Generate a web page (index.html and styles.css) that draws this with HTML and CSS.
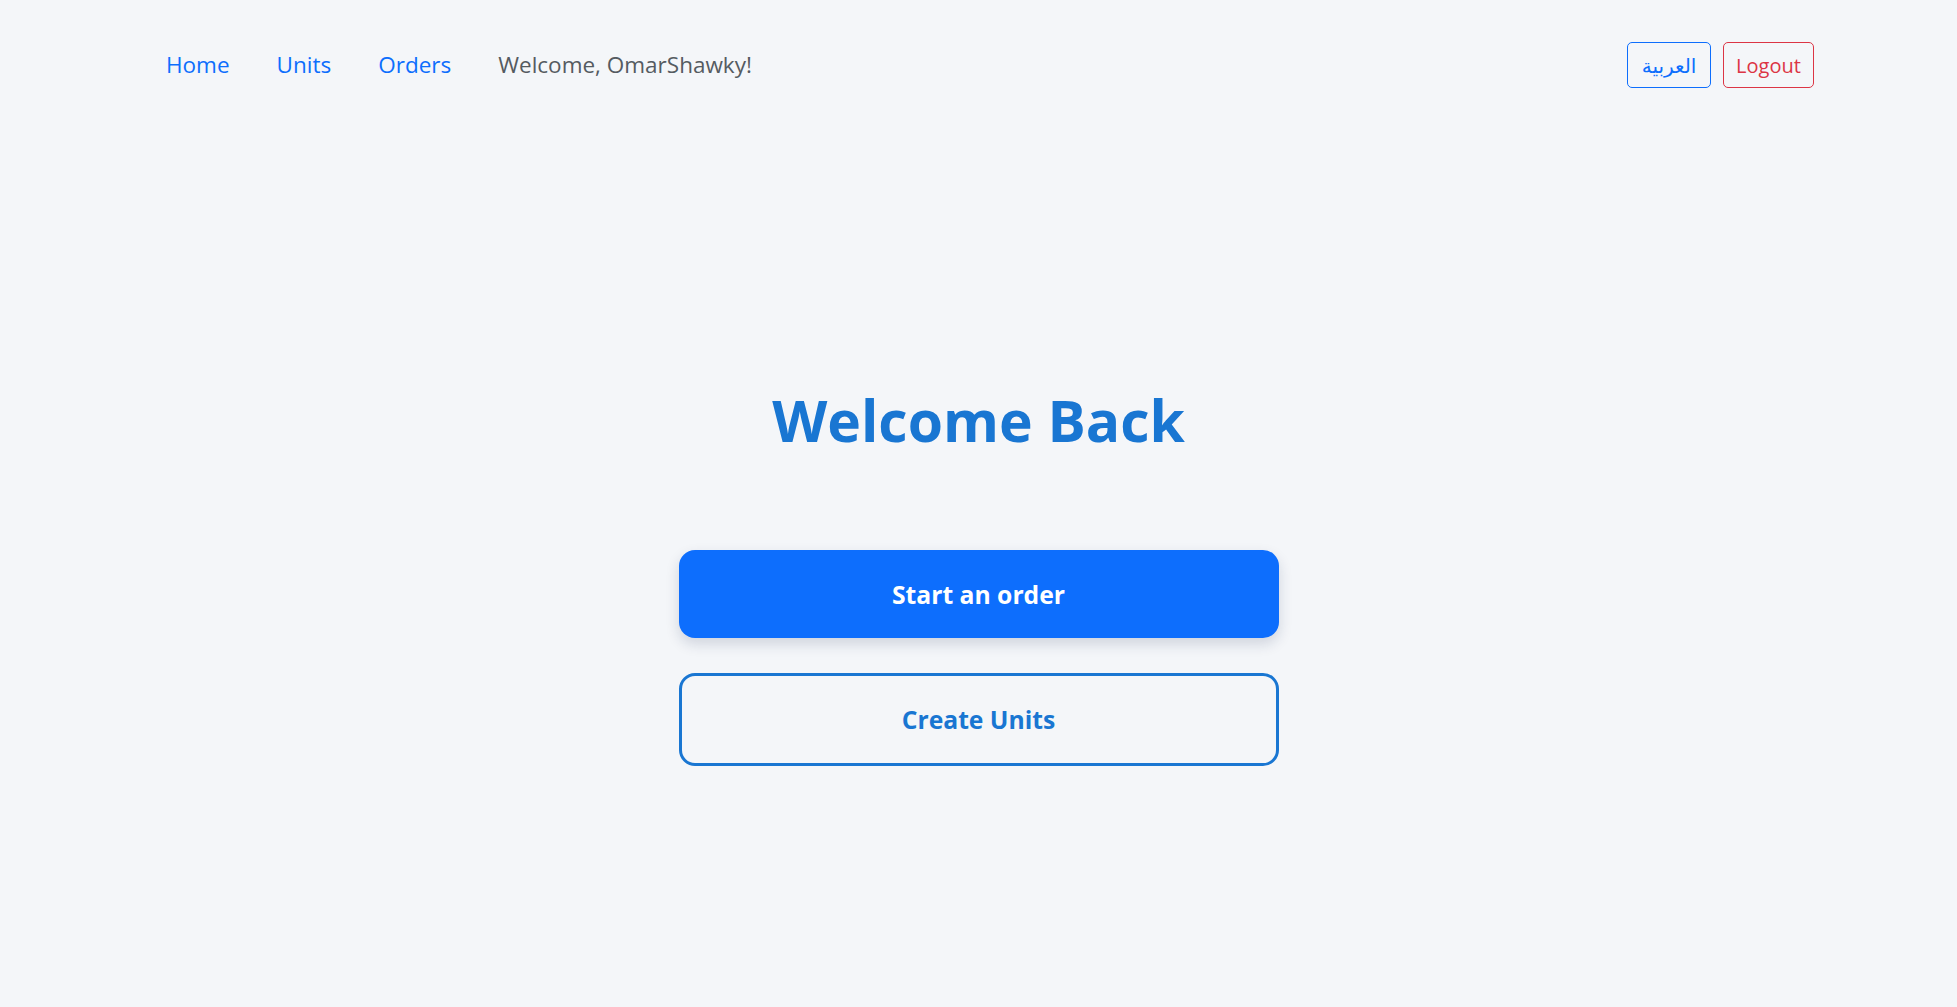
FILE: index.html
```html
<!DOCTYPE html>
<html lang="en">
<head>
<meta charset="utf-8">
<title>Home</title>
<link rel="stylesheet" href="styles.css">
</head>
<body>
<header class="navbar">
  <nav class="nav-left">
    <a class="nav-link" href="#">Home</a>
    <a class="nav-link" href="#">Units</a>
    <a class="nav-link" href="#">Orders</a>
    <span class="nav-text">Welcome, OmarShawky!</span>
  </nav>
  <div class="nav-right">
    <button class="btn-sm btn-lang" lang="ar" dir="rtl">العربية</button>
    <button class="btn-sm btn-logout">Logout</button>
  </div>
</header>
<main class="hero">
  <h1 class="hero-title">Welcome Back</h1>
  <div class="hero-actions">
    <a class="btn-big btn-primary" href="#">Start an order</a>
    <a class="btn-big btn-outline" href="#">Create Units</a>
  </div>
</main>
</body>
</html>
```
FILE: styles.css
```css
* { box-sizing: border-box; }
html, body {
  margin: 0;
  background: #f4f6f9;
  font-family: "Open Sans", "Noto Sans", "DejaVu Sans", sans-serif;
}
.navbar {
  display: flex;
  justify-content: space-between;
  align-items: center;
  padding: 41px 143px 0 143px;
}
.nav-left {
  display: flex;
  align-items: center;
  gap: 47px;
  padding-left: 23px;
}
.nav-link {
  color: #0d6efd;
  text-decoration: none;
  font-size: 22.5px;
  line-height: 48px;
}
.nav-text {
  color: #555b61;
  font-size: 22.5px;
  line-height: 48px;
}
.nav-right {
  display: flex;
  gap: 12px;
}
.btn-sm {
  height: 46px;
  background: transparent;
  border: 1px solid;
  border-radius: 5px;
  font-family: inherit;
  font-size: 20px;
  padding: 0 8px;
}
.btn-lang {
  color: #0d6efd;
  border-color: #0d6efd;
  width: 84px;
  font-family: "Noto Sans", "DejaVu Sans", sans-serif;
}
.btn-logout {
  color: #dc3545;
  border-color: #dc3545;
  width: 91px;
}
.hero {
  display: flex;
  flex-direction: column;
  align-items: center;
  padding-top: 291px;
}
.hero-title {
  margin: 0;
  color: #1976d2;
  font-size: 57px;
  font-weight: 700;
  line-height: 80px;
}
.hero-actions {
  display: flex;
  flex-direction: column;
  gap: 35px;
  margin-top: 90px;
  width: 600px;
}
.btn-big {
  display: flex;
  align-items: center;
  justify-content: center;
  text-decoration: none;
  font-weight: 700;
  font-size: 24.7px;
  border-radius: 16px;
}
.btn-primary {
  height: 88px;
  background: #0d6efd;
  color: #fff;
  box-shadow: 0 6px 14px rgba(20, 40, 80, 0.16);
}
.btn-outline {
  height: 93px;
  border: 3px solid #1976d2;
  color: #1976d2;
}
```
